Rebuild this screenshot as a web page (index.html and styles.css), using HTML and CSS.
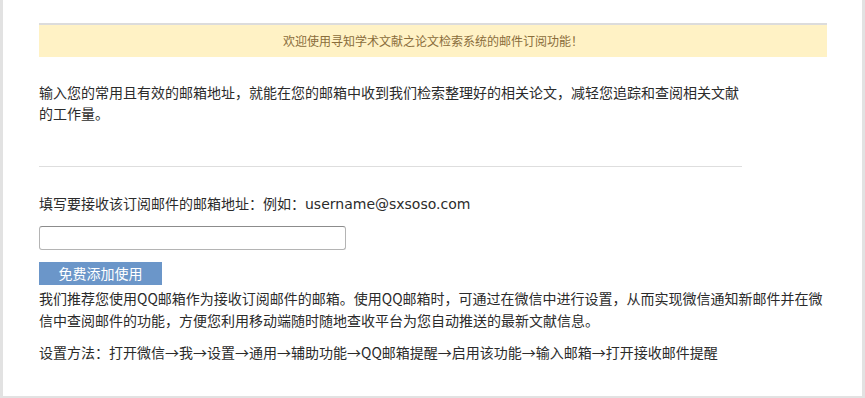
FILE: index.html
```html
<!DOCTYPE html>
<html lang="zh-CN">
<head>
<meta charset="utf-8">
<title>邮件订阅</title>
<link rel="stylesheet" href="styles.css">
</head>
<body>
<div class="page">
  <div class="content">
    <div class="banner">欢迎使用寻知学术文献之论文检索系统的邮件订阅功能！</div>
    <p class="intro">输入您的常用且有效的邮箱地址，就能在您的邮箱中收到我们检索整理好的相关论文，减轻您追踪和查阅相关文献的工作量。</p>
    <hr class="divider">
    <div class="label">填写要接收该订阅邮件的邮箱地址：例如：<span class="latin">username@sxsoso.com</span></div>
    <input class="email" type="text">
    <button class="submit" type="button">免费添加使用</button>
    <p class="note">我们推荐您使用QQ邮箱作为接收订阅邮件的邮箱。使用QQ邮箱时，可通过在微信中进行设置，从而实现微信通知新邮件并在微信中查阅邮件的功能，方便您利用移动端随时随地查收平台为您自动推送的最新文献信息。</p>
    <p class="steps">设置方法：打开微信→我→设置→通用→辅助功能→QQ邮箱提醒→启用该功能→输入邮箱→打开接收邮件提醒</p>
  </div>
</div>
</body>
</html>
```

FILE: styles.css
```css
html, body {
  margin: 0;
  padding: 0;
}
body {
  background: #e2e2e2;
  font-family: "Noto Sans CJK SC", sans-serif;
  color: #2b2b2b;
}
.page {
  margin: 0 3px 0 3px;
  height: 396px;
  background: #fff;
  overflow: hidden;
}
.content {
  padding: 23px 35px 0 36px;
}
.banner {
  border-top: 2px solid #dcdcdc;
  background: #fff2c5;
  color: #8a6d3b;
  height: 32px;
  line-height: 32px;
  text-align: center;
  font-size: 12px;
}
.intro {
  margin: 25px 0 0 0;
  width: 703px;
  font-size: 14px;
  line-height: 21px;
}
.divider {
  margin: 42px 0 0 0;
  width: 703px;
  border: 0;
  border-top: 1px solid #dedede;
  height: 0;
}
.label {
  margin-top: 26px;
  font-size: 14px;
  line-height: 20px;
}
.latin {
  font-family: "DejaVu Sans", sans-serif;
}
.email {
  display: block;
  margin-top: 12px;
  width: 307px;
  height: 24px;
  box-sizing: border-box;
  border: 1px solid #b4b4b4;
  border-top-color: #8c8c8c;
  border-radius: 3px;
  padding: 0 4px;
  font-size: 14px;
}
.submit {
  display: block;
  margin-top: 12px;
  width: 123px;
  height: 23px;
  border: 0;
  padding: 0;
  background: #6b96c9;
  color: #fff;
  font-family: "Noto Sans CJK SC", sans-serif;
  font-size: 14px;
  line-height: 23px;
}
.note {
  margin: 2px 0 0 0;
  font-size: 14px;
  line-height: 22px;
}
.steps {
  margin: 10px 0 0 0;
  font-size: 14px;
  line-height: 22px;
}
```
